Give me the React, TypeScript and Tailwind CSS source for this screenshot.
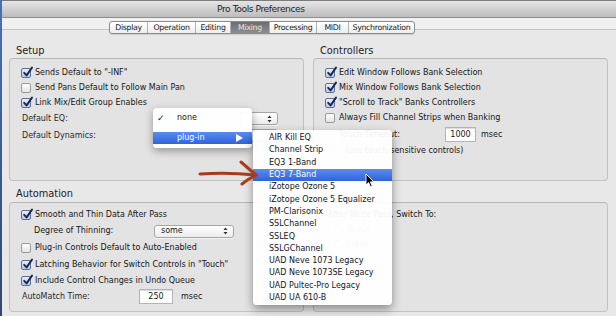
import React from 'react';

function Check({ on }: { on?: boolean }) {
  return (
    <span
      className={`relative inline-block w-[10px] h-[10px] shrink-0 rounded-[2px] border ${
        on
          ? 'border-[#5f6f90] bg-gradient-to-b from-[#eaf1fc] to-[#b3c9ec]'
          : 'border-[#9a9a9a] bg-gradient-to-b from-white to-[#e4e4e4]'
      }`}
    >
      {on && (
        <svg className="absolute -top-[3px] left-[0px]" width="12" height="12" viewBox="0 0 12 12">
          <path d="M2.2 6.8 L4.6 9.4 L10 1.6" stroke="#162553" strokeWidth="1.9" fill="none" strokeLinecap="round" strokeLinejoin="round" />
        </svg>
      )}
    </span>
  );
}

function CheckRow({ on, label, h = 'h-[15px]' }: { on?: boolean; label: string; h?: string }) {
  return (
    <div className={`flex items-center gap-[4px] ${h}`}>
      <Check on={on} />
      <span>{label}</span>
    </div>
  );
}

function Arrows() {
  return (
    <svg width="5" height="8" viewBox="0 0 5 8">
      <path d="M2.5 0.5 L4.5 3 L0.5 3 Z M2.5 7.5 L4.5 5 L0.5 5 Z" fill="#333" />
    </svg>
  );
}

function Select({ w, value }: { w: string; value?: string }) {
  return (
    <div className={`${w} h-[13px] flex items-center justify-between pl-[6px] pr-[5px] rounded-[3px] border border-[#a5a5a5] bg-gradient-to-b from-white to-[#ececec] shadow-[0_1px_0_rgba(255,255,255,0.6)]`}>
      <span>{value}</span>
      <Arrows />
    </div>
  );
}

function Field({ w, value }: { w: string; value: string }) {
  return (
    <div className={`${w} h-[15px] flex items-center justify-center bg-white border border-[#b4b4b4] shadow-[inset_0_1px_1px_rgba(0,0,0,0.15)]`}>
      {value}
    </div>
  );
}

const tabs = [
  { name: 'Display', w: 'w-[37px]' },
  { name: 'Operation', w: 'w-[48px]' },
  { name: 'Editing', w: 'w-[35px]' },
  { name: 'Mixing', w: 'w-[39px]', on: true },
  { name: 'Processing', w: 'w-[47px]' },
  { name: 'MIDI', w: 'w-[32px]' },
  { name: 'Synchronization', w: 'w-[66px]' },
];

const plugins = [
  'AIR Kill EQ',
  'Channel Strip',
  'EQ3 1-Band',
  'EQ3 7-Band',
  'iZotope Ozone 5',
  'iZotope Ozone 5 Equalizer',
  'PM-Clarisonix',
  'SSLChannel',
  'SSLEQ',
  'SSLGChannel',
  'UAD Neve 1073 Legacy',
  'UAD Neve 1073SE Legacy',
  'UAD Pultec-Pro Legacy',
  'UAD UA 610-B',
];

export default function App() {
  return (
    <div className="relative w-[616px] h-[316px] overflow-hidden flex bg-[#e8e8e8] text-[8px] leading-none text-[#161616] font-['DejaVu_Sans',sans-serif]">
      <div className="w-[2px] shrink-0 bg-gradient-to-b from-[#4a72b0] to-[#34476a]" />

      <div className="flex-1 flex flex-col">
        {/* title bar */}
        <div className="h-[18px] flex items-center border-t border-[#7c7c7c] border-b border-b-[#8e8e8e] bg-gradient-to-b from-[#e6e6e6] to-[#bdbdbd]">
          <span className="ml-[215px] text-[9.2px] tracking-[-0.45px] text-[#262626]">Pro Tools Preferences</span>
        </div>
        <div className="h-[12px] bg-[#f0f0f0] border-b border-[#c6c6c6]" />

        {/* tabs */}
        <div className="-mt-[9px] ml-[107px] flex h-[13px] w-fit rounded-[3px] border border-[#8c8c8c] overflow-hidden bg-gradient-to-b from-white to-[#eeeeee] shadow-[0_1px_1px_rgba(0,0,0,0.12)]">
          {tabs.map((t, i) => (
            <div
              key={t.name}
              className={`${t.w} flex items-center justify-center text-[7.8px] tracking-[-0.3px] ${i > 0 ? 'border-l border-[#b2b2b2]' : ''} ${
                t.on ? 'bg-gradient-to-b from-[#6d6d6d] to-[#8e8e8e] text-[#e4e4e4]' : 'text-[#1a1a1a]'
              }`}
            >
              {t.name}
            </div>
          ))}
        </div>

        {/* content */}
        <div className="grid grid-cols-[295px_295px] gap-x-[9px] pl-[7px] pt-[12px]">
          {/* Setup */}
          <div>
            <div className="h-[12px] pl-[7px] text-[9.8px] text-[#222]">Setup</div>
            <div className="h-[123px] rounded-[4px] border border-[#c2c2c2] border-t-[#b6b6b6] bg-[#e3e3e3] pl-[11px] pt-[6px]">
              <CheckRow on label={'Sends Default to "-INF"'} />
              <CheckRow label="Send Pans Default to Follow Main Pan" />
              <CheckRow on label="Link Mix/Edit Group Enables" />
              <div className="flex items-center h-[17px] pl-[1px] text-[#2a2a2a]">
                <span className="w-[218px]">Default EQ:</span>
                <Select w="w-[38px]" />
              </div>
              <div className="flex items-center h-[17px] pl-[1px] text-[#2a2a2a]">
                <span className="w-[218px]">Default Dynamics:</span>
                <Select w="w-[38px]" />
              </div>
            </div>
          </div>

          {/* Controllers */}
          <div>
            <div className="h-[12px] pl-[7px] text-[9.8px] text-[#222]">Controllers</div>
            <div className="h-[123px] rounded-[4px] border border-[#c2c2c2] border-t-[#b6b6b6] bg-[#e3e3e3] pl-[11px] pt-[6px]">
              <CheckRow on label="Edit Window Follows Bank Selection" />
              <CheckRow on label="Mix Window Follows Bank Selection" />
              <CheckRow on label={'"Scroll to Track" Banks Controllers'} />
              <CheckRow label="Always Fill Channel Strips when Banking" />
              <div className="flex items-center gap-[5px] h-[19px] pl-[14px]">
                <span className="w-[101px]">Touch Timeout:</span>
                <Field w="w-[31px]" value="1000" />
                <span>msec</span>
              </div>
              <div className="flex items-center h-[13px] pl-[20px]">(use touch-sensitive controls)</div>
            </div>
          </div>

          {/* Automation */}
          <div className="pt-[8px]">
            <div className="h-[13px] pl-[7px] text-[9.8px] text-[#222]">Automation</div>
            <div className="h-[110px] rounded-[4px] border border-[#c2c2c2] border-t-[#b6b6b6] bg-[#e3e3e3] pl-[11px] pt-[5px]">
              <CheckRow on label="Smooth and Thin Data After Pass" h="h-[14px]" />
              <div className="flex items-center h-[18px] pl-[13px]">
                <span className="w-[120px]">Degree of Thinning:</span>
                <Select w="w-[80px]" value="some" />
              </div>
              <CheckRow label="Plug-in Controls Default to Auto-Enabled" h="h-[16px]" />
              <CheckRow on label={'Latching Behavior for Switch Controls in "Touch"'} h="h-[17px]" />
              <CheckRow on label="Include Control Changes in Undo Queue" />
              <div className="flex items-center h-[17px] pl-[1px]">
                <span className="w-[117px] text-[#2a2a2a]">AutoMatch Time:</span>
                <Field w="w-[34px]" value="250" />
                <span className="ml-[8px]">msec</span>
              </div>
            </div>
          </div>

          <div className="pt-[8px]">
            <div className="h-[13px]" />
            <div className="h-[110px] rounded-[4px] border border-[#c2c2c2] border-t-[#b6b6b6] bg-[#e3e3e3] pl-[14px] pt-[5px]">
              <div className="h-[14px] flex items-center">After Write Pass, Switch To:</div>
              {['Touch', 'Latch'].map((r) => (
                <div key={r} className="flex items-center gap-[4px] h-[15px] pl-[6px] text-[#9a9a9a]">
                  <span className="w-[9px] h-[9px] rounded-full border border-[#b8b8b8] bg-[#f2f2f2]" />
                  <span>{r}</span>
                </div>
              ))}
            </div>
          </div>
        </div>
      </div>

      {/* first popup menu */}
      <div className="absolute left-[153px] top-[108px] w-[99px] h-[40px] rounded-[4px] bg-white/[0.96] shadow-[0_3px_8px_rgba(0,0,0,0.35)]">
        <div className="flex items-center h-[16px] mt-[2px] pl-[4px]">
          <span className="w-[20px] text-[9px]">✓</span>
          <span>none</span>
        </div>
        <div className="flex items-center h-[12px] mt-[6px] pl-[24px] pr-[9px] bg-gradient-to-b from-[#5b8cf0] to-[#2f63dc] text-white">
          <span className="flex-1">plug-in</span>
          <svg width="7" height="8" viewBox="0 0 7 8">
            <path d="M0 0 L7 4 L0 8 Z" fill="#fff" />
          </svg>
        </div>
      </div>

      {/* plug-in submenu */}
      <div className="absolute left-[253px] top-[130px] w-[139px] h-[175px] pt-[2px] rounded-[4px] bg-white/[0.94] shadow-[0_4px_10px_rgba(0,0,0,0.4)]">
        {plugins.map((p) => (
          <div
            key={p}
            className={`h-[12.3px] flex items-center pl-[16px] ${
              p === 'EQ3 7-Band' ? 'bg-gradient-to-b from-[#5b8cf0] to-[#2f63dc] text-white' : 'text-[#141428]'
            }`}
          >
            {p}
          </div>
        ))}
      </div>

      {/* red arrow annotation */}
      <svg className="absolute left-[195px] top-[158px]" width="66" height="30" viewBox="0 0 66 30">
        <path d="M5 16 Q32 14 61 17" stroke="#a83b1c" strokeWidth="3" fill="none" strokeLinecap="round" />
        <path d="M46 4 Q54 11 61 17 Q53 21 47 26" stroke="#a83b1c" strokeWidth="3" fill="none" strokeLinecap="round" strokeLinejoin="round" />
      </svg>

      {/* mouse pointer */}
      <svg className="absolute left-[365px] top-[173px]" width="10" height="15" viewBox="0 0 10 15">
        <path d="M1 1 L1 12 L3.6 9.6 L5.5 13.8 L7.2 13 L5.4 8.9 L8.9 8.9 Z" fill="#000" stroke="#fff" strokeWidth="0.9" strokeLinejoin="round" />
      </svg>
    </div>
  );
}
